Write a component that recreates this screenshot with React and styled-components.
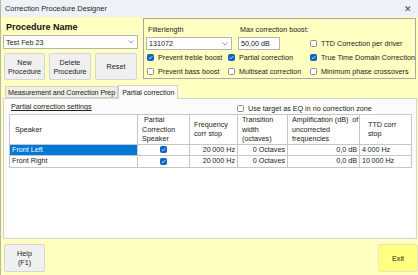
import React from "react";
import styled, { createGlobalStyle } from "styled-components";

const Global = createGlobalStyle`
  html, body { margin: 0; padding: 0; }
  body { font-family: "Liberation Sans", Arial, sans-serif; color: #1b1b1b; }
`;

const Window = styled.div`
  width: 418px;
  height: 275px;
  background: #ffffc2;
  display: flex;
  flex-direction: column;
  box-sizing: border-box;
  border-left: 1px solid #b8b8a0;
  overflow: hidden;
  font-size: 7.2px;
`;

const TitleBar = styled.div`
  height: 17px;
  flex: none;
  background: #eef2f8;
  display: flex;
  align-items: center;
  justify-content: space-between;
  padding: 0 6px 0 4px;
  font-size: 7.4px;
  color: #222;
`;

const Close = styled.span`
  font-size: 9px;
  color: #444;
`;

const Top = styled.div`
  display: flex;
  gap: 5px;
  padding: 1px 0 0 2px;
  height: 62px;
  flex: none;
`;

const LeftCol = styled.div`
  width: 135px;
  display: flex;
  flex-direction: column;
`;

const Heading = styled.div`
  font-size: 9px;
  font-weight: bold;
  line-height: 11px;
  padding: 4px 0 0 3px;
  color: #111;
`;

const Combo = styled.div`
  height: ${(p) => p.$h || 14}px;
  width: ${(p) => (p.$w ? p.$w + "px" : "auto")};
  box-sizing: border-box;
  background: #fff;
  border: 1px solid #b4b4b4;
  display: flex;
  align-items: center;
  justify-content: space-between;
  padding: 0 3px 0 2px;
  margin-top: ${(p) => p.$mt || 0}px;
`;

const Chevron = () => (
  <svg width="6" height="4" viewBox="0 0 6 4">
    <polyline points="0.5,0.5 3,3 5.5,0.5" fill="none" stroke="#888" strokeWidth="0.8" />
  </svg>
);

const ButtonRow = styled.div`
  display: flex;
  gap: 4px;
  margin-top: 4px;
  padding-left: 1px;
`;

const Button = styled.div`
  width: ${(p) => p.$w}px;
  height: ${(p) => p.$h || 27}px;
  box-sizing: border-box;
  background: ${(p) => (p.$yellow ? "#ffff80" : "#f0f0f0")};
  border: 1px solid ${(p) => (p.$yellow ? "#e8e8c0" : "#d6d6d6")};
  border-radius: 2px;
  display: flex;
  align-items: center;
  justify-content: center;
  text-align: center;
  line-height: 9px;
  color: #222;
`;

const Group = styled.div`
  width: 273px;
  height: 61px;
  box-sizing: border-box;
  border: 1px solid #a8a8a8;
  display: flex;
`;

const GroupLeft = styled.div`
  width: 165px;
  padding: 6px 0 0 2px;
  display: flex;
  flex-direction: column;
`;

const Fields = styled.div`
  display: flex;
  gap: 6px;
`;

const Field = styled.div`
  display: flex;
  flex-direction: column;
`;

const FieldLabel = styled.div`
  height: 9px;
  line-height: 9px;
  padding-left: 2px;
  margin-bottom: 3px;
  white-space: nowrap;
`;

const CheckGrid = styled.div`
  display: grid;
  grid-template-columns: 81px auto;
  grid-auto-rows: 14px;
  padding-left: 1px;
`;

const GroupRight = styled.div`
  padding: 17px 0 0 0;
  display: flex;
  flex-direction: column;
`;

const CheckRow = styled.label`
  display: flex;
  align-items: center;
  gap: 4px;
  height: 14px;
  white-space: nowrap;
  color: #222;
`;

const Box = styled.span`
  width: 7px;
  height: 7px;
  box-sizing: border-box;
  border-radius: 1.5px;
  flex: none;
  display: flex;
  align-items: center;
  justify-content: center;
  background: ${(p) => (p.$on ? "#0f63c3" : "#fff")};
  border: 1px solid ${(p) => (p.$on ? "#0f63c3" : "#8c8c8c")};
`;

const Tick = () => (
  <svg width="5" height="5" viewBox="0 0 5 5">
    <polyline points="0.8,2.6 2,3.7 4.3,1.2" fill="none" stroke="#fff" strokeWidth="0.8" />
  </svg>
);

const Check = ({ on, children }) => (
  <CheckRow>
    <Box $on={on}>{on && <Tick />}</Box>
    {children}
  </CheckRow>
);

const TabArea = styled.div`
  margin-top: 4px;
  padding-left: 2px;
  display: flex;
  flex-direction: column;
`;

const TabStrip = styled.div`
  display: flex;
  align-items: flex-end;
  padding-left: 2px;
  height: 14px;
  position: relative;
  z-index: 1;
`;

const Tab = styled.div`
  height: ${(p) => (p.$active ? 14 : 12)}px;
  box-sizing: border-box;
  padding: 0 ${(p) => (p.$active ? 3 : 2)}px;
  display: flex;
  align-items: center;
  background: ${(p) => (p.$active ? "#fbfbfb" : "#efefe6")};
  border: 1px solid #d0d0c8;
  border-bottom: ${(p) => (p.$active ? "none" : "1px solid #d0d0c8")};
  margin-bottom: ${(p) => (p.$active ? -1 : 0)}px;
  white-space: nowrap;
  color: #222;
  letter-spacing: -0.1px;
`;

const Panel = styled.div`
  width: 414px;
  height: 141px;
  box-sizing: border-box;
  background: #fbfbfb;
  border: 1px solid #d4d4cc;
  display: flex;
  flex-direction: column;
  padding: 0 3px 0 5px;
`;

const SettingsRow = styled.div`
  height: 15px;
  display: flex;
  align-items: flex-start;
`;

const SettingsTitle = styled.div`
  text-decoration: underline;
  margin: 3px 0 0 2px;
  width: 226px;
  color: #222;
`;

const EqOption = styled.div`
  margin-top: 2px;
  background: #fff;
  padding-right: 4px;
`;

const Grid = styled.div`
  flex: 1;
  background: #fff;
  margin-bottom: 1px;
`;

const Table = styled.table`
  border-collapse: collapse;
  width: 402px;
  table-layout: fixed;
  font-size: 7.2px;
`;

const Th = styled.th`
  font-weight: normal;
  text-align: left;
  vertical-align: middle;
  height: 27px;
  padding: 0 0 0 ${(p) => p.$pl || 4}px;
  line-height: 9.5px;
  border: 1px solid #c6c6c6;
  color: #222;
`;

const Td = styled.td`
  height: 10.5px;
  padding: 0 2px 0 2px;
  border: 1px solid #c6c6c6;
  text-align: ${(p) => p.$align || "left"};
  background: ${(p) => (p.$sel ? "#0078d7" : "#fff")};
  color: ${(p) => (p.$sel ? "#fff" : "#222")};
  white-space: nowrap;
  line-height: 10px;
`;

const CellBox = styled.div`
  display: flex;
  justify-content: center;
`;

const Bottom = styled.div`
  display: flex;
  justify-content: space-between;
  padding: 5px 0 0 3px;
`;

const rows = [
  { name: "Front Left", freq: "20\u202F000 Hz", ttd: "4\u202F000 Hz", sel: true },
  { name: "Front Right", freq: "20\u202F000 Hz", ttd: "10\u202F000 Hz", sel: false },
];

export default function App() {
  return (
    <>
      <Global />
      <Window>
        <TitleBar>
          <span>Correction Procedure Designer</span>
          <Close>✕</Close>
        </TitleBar>
        <Top>
          <LeftCol>
            <Heading>Procedure Name</Heading>
            <Combo $mt={2}>
              <span>Test Feb 23</span>
              <Chevron />
            </Combo>
            <ButtonRow>
              <Button $w={41}>New<br />Procedure</Button>
              <Button $w={42}>Delete<br />Procedure</Button>
              <Button $w={42}>Reset</Button>
            </ButtonRow>
          </LeftCol>
          <Group>
            <GroupLeft>
              <Fields>
                <Field>
                  <FieldLabel>Filterlength</FieldLabel>
                  <Combo $w={86} $h={13}>
                    <span>131072</span>
                    <Chevron />
                  </Combo>
                </Field>
                <Field>
                  <FieldLabel>Max correction boost:</FieldLabel>
                  <Combo $w={42} $h={13}>
                    <span>50,00 dB</span>
                  </Combo>
                </Field>
              </Fields>
              <CheckGrid>
                <Check on>Prevent treble boost</Check>
                <Check on>Partial correction</Check>
                <Check>Prevent bass boost</Check>
                <Check>Multiseat correction</Check>
              </CheckGrid>
            </GroupLeft>
            <GroupRight>
              <Check>TTD Correction per driver</Check>
              <Check on>True Time Domain Correction</Check>
              <Check>Minimum phase crossovers</Check>
            </GroupRight>
          </Group>
        </Top>
        <TabArea>
          <TabStrip>
            <Tab>Measurement and Correction Prep</Tab>
            <Tab $active>Partial correction</Tab>
          </TabStrip>
          <Panel>
            <SettingsRow>
              <SettingsTitle>Partial correction settings</SettingsTitle>
              <EqOption>
                <Check>Use target as EQ in no correction zone</Check>
              </EqOption>
            </SettingsRow>
            <Grid>
              <Table>
                <colgroup>
                  <col style={{ width: 128 }} />
                  <col style={{ width: 52 }} />
                  <col style={{ width: 48 }} />
                  <col style={{ width: 50 }} />
                  <col style={{ width: 72 }} />
                  <col style={{ width: 52 }} />
                </colgroup>
                <thead>
                  <tr>
                    <Th $pl={5}>Speaker</Th>
                    <Th>&nbsp;Partial<br />Correction<br />Speaker</Th>
                    <Th>Frequency<br />corr stop</Th>
                    <Th>Transition<br />width<br />(octaves)</Th>
                    <Th>Amplification (dB)&nbsp; of<br />uncorrected<br />frequencies</Th>
                    <Th $pl={8}>TTD corr<br />stop</Th>
                  </tr>
                </thead>
                <tbody>
                  {rows.map((r) => (
                    <tr key={r.name}>
                      <Td $sel={r.sel}>{r.name}</Td>
                      <Td>
                        <CellBox>
                          <Box $on>
                            <Tick />
                          </Box>
                        </CellBox>
                      </Td>
                      <Td $align="right">{r.freq}</Td>
                      <Td $align="right">0 Octaves</Td>
                      <Td $align="right">0,0 dB</Td>
                      <Td>{r.ttd}</Td>
                    </tr>
                  ))}
                </tbody>
              </Table>
            </Grid>
          </Panel>
        </TabArea>
        <Bottom>
          <Button $w={41} $h={28}>Help<br />(F1)</Button>
          <Button $w={40} $h={28} $yellow>Exit</Button>
        </Bottom>
      </Window>
    </>
  );
}
